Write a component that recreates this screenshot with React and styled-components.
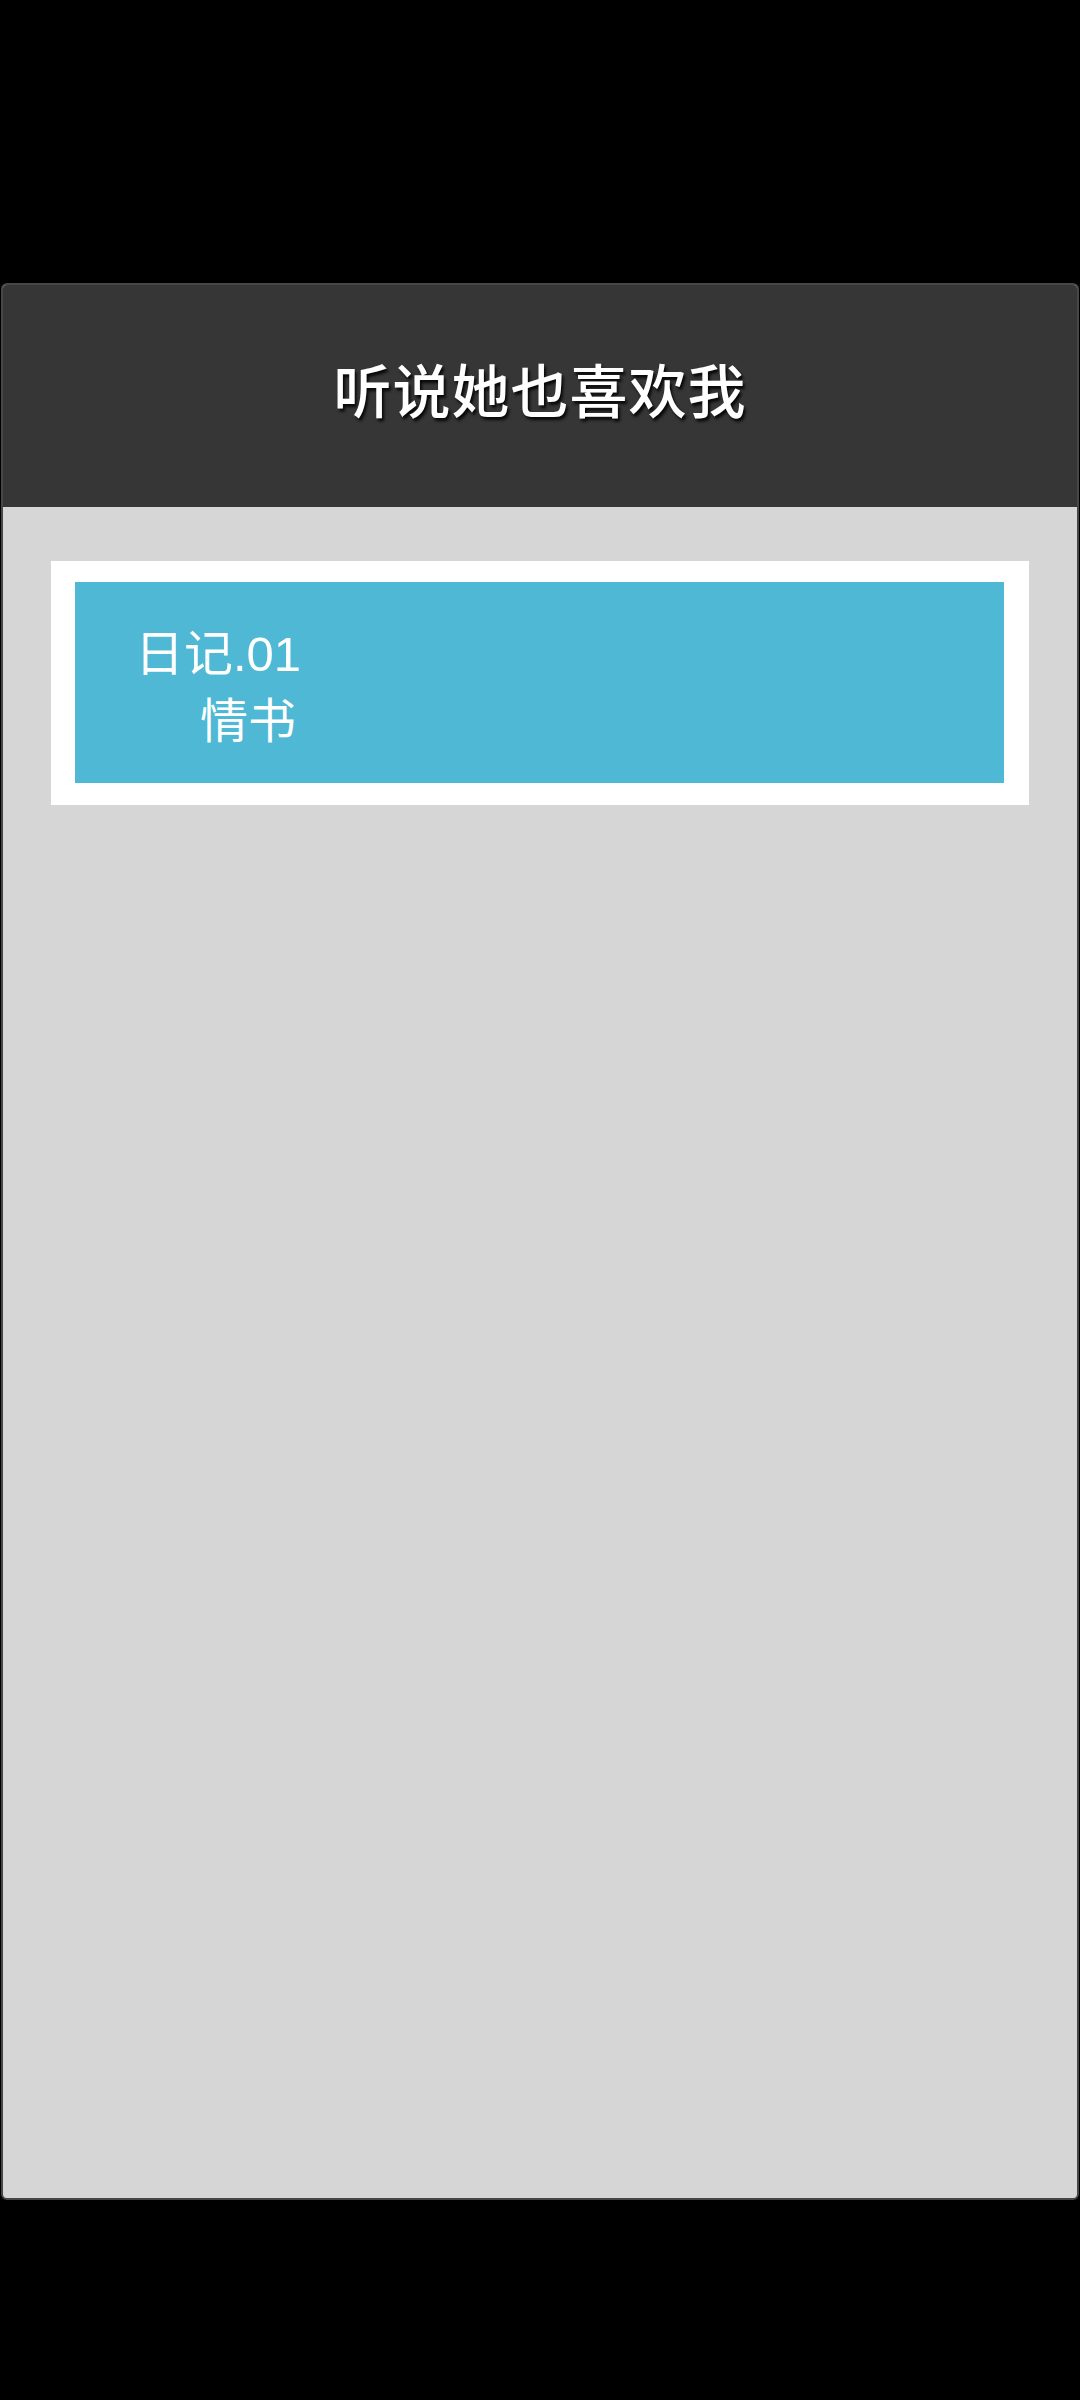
import React from 'react';
import styled, { createGlobalStyle } from 'styled-components';

const GlobalStyle = createGlobalStyle`
    html, body {
        margin: 0;
        padding: 0;
        background: #000;
    }
    body {
        font-family: "Liberation Sans", "Noto Sans CJK SC", sans-serif;
    }
`

const diaries = [
    { no: '日记.01', title: '情书' },
];

function DiaryCard({ no, title }) {
    return (
        <CardFrame>
            <CardInner>
                <DiaryNo>{no}</DiaryNo>
                <DiaryTitle>{title}</DiaryTitle>
            </CardInner>
        </CardFrame>
    )
}

export default function App() {
    return (
        <Screen>
            <GlobalStyle />
            <Panel>
                <Header>
                    <HeaderTitle>听说她也喜欢我</HeaderTitle>
                </Header>
                <Body>
                    {diaries.map((d) => (
                        <DiaryCard key={d.no} no={d.no} title={d.title} />
                    ))}
                </Body>
            </Panel>
        </Screen>
    )
}

const Screen = styled.div`
    width: 1080px;
    height: 2400px;
    background: #000;
    padding: 283px 1px 0;
    box-sizing: border-box;
`

const Panel = styled.div`
    height: 1913px;
    display: flex;
    flex-direction: column;
    border: 2px solid #474747;
    border-radius: 6px;
    overflow: hidden;
    background: #d6d6d6;
`

const Header = styled.div`
    height: 222px;
    box-sizing: border-box;
    padding-bottom: 16px;
    flex: none;
    background: #363636;
    display: flex;
    align-items: center;
    justify-content: center;
`

const HeaderTitle = styled.h1`
    margin: 0;
    color: #fff;
    font-family: "Noto Sans CJK SC", sans-serif;
    font-size: 58px;
    font-weight: 500;
    letter-spacing: 1px;
    text-shadow: 2px 3px 3px rgba(0, 0, 0, 0.85);
`

const Body = styled.div`
    flex: 1;
    padding: 54px 48px 0;
    display: flex;
    flex-direction: column;
    gap: 40px;
`

const CardFrame = styled.div`
    background: #fff;
    padding: 21px 25px 22px 24px;
`

const CardInner = styled.div`
    background: #4eb8d5;
    height: 201px;
    box-sizing: border-box;
    padding: 38px 60px 0;
    color: #fff;
`

const DiaryNo = styled.div`
    font-size: 49px;
    line-height: 68px;
`

const DiaryTitle = styled.div`
    font-size: 48px;
    line-height: 68px;
    margin-left: 65px;
`
